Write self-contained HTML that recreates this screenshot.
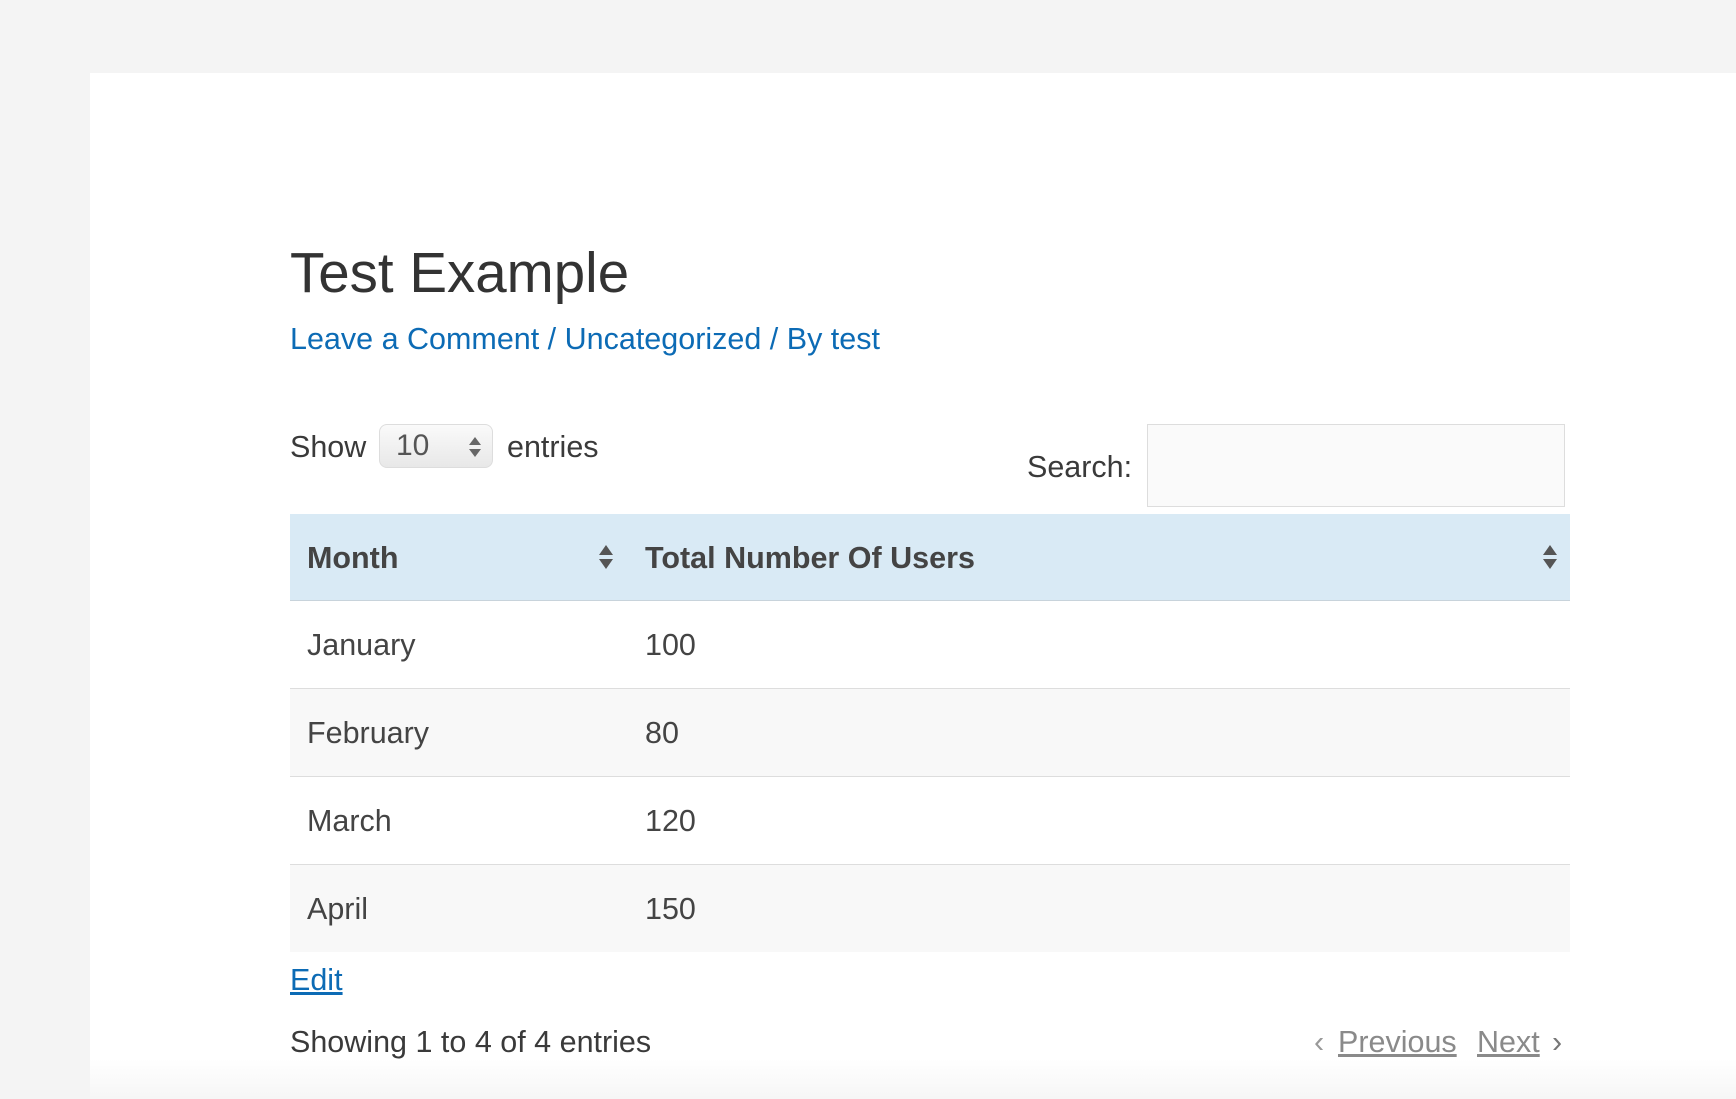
<!DOCTYPE html>
<html><head><meta charset="utf-8"><style>
*{box-sizing:border-box;margin:0;padding:0}
body{width:1736px;height:1099px;background:#f4f4f4;font-family:"Liberation Sans",sans-serif;color:#3a3a3a;position:relative;overflow:hidden}
.card{position:absolute;left:90px;top:73px;right:0;bottom:0;background:#fff}
.fade{position:absolute;left:90px;right:0;bottom:0;height:40px;background:linear-gradient(#fff,#f6f6f6)}
.a{position:absolute;white-space:nowrap}
h1{position:absolute;left:290px;top:233px;font-size:56.5px;font-weight:400;color:#333;line-height:80px}
.meta{left:290px;top:320px;font-size:30.5px;color:#0c6bb5;line-height:38px}
.t{font-size:30.5px;line-height:36px}
.sel{position:absolute;left:379px;top:424px;width:114px;height:44px;border:1px solid #ddd;border-radius:8px;background:linear-gradient(#fafafa,#e8e8e8);font-size:30px;color:#555;padding-left:16px;line-height:42px}
.inp{position:absolute;left:1147px;top:424px;width:418px;height:83px;border:1px solid #ddd;background:#fafafa}
table{position:absolute;left:290px;top:514px;width:1280px;border-collapse:collapse;font-size:30.5px}
th{background:#d9eaf5;height:86px;text-align:left;padding-left:17px;padding-top:3px;font-weight:700;color:#444;border-bottom:1px solid #c8d3db;position:relative}
td{height:88px;padding-left:17px;padding-top:3px;color:#444;border-top:1px solid #ddd}
tr.g td{background:#f8f8f8}
tr:first-child td{border-top:none}
.so{position:absolute;top:30px;width:16px;height:26px}
</style></head><body>
<div class="card"></div><div class="fade"></div>
<h1>Test Example</h1>
<div class="a meta">Leave a Comment / Uncategorized / By test</div>
<div class="a t" style="left:290px;top:429px">Show</div>
<div class="sel">10<svg style="position:absolute;right:10px;top:10px" width="14" height="24" viewBox="0 0 14 24"><path d="M7 2L13 10H1Z M7 22L13 14H1Z" fill="#666"/></svg></div>
<div class="a t" style="left:507px;top:429px">entries</div>
<div class="a t" style="left:1027px;top:449px">Search:</div>
<div class="inp"></div>
<table>
<tr><th style="width:338px">Month<svg class="so" style="left:308px" viewBox="0 0 16 26"><path d="M8 1L15 11H1Z M8 25L15 15H1Z" fill="#555"/></svg></th><th>Total Number Of Users<svg class="so" style="right:12px" viewBox="0 0 16 26"><path d="M8 1L15 11H1Z M8 25L15 15H1Z" fill="#555"/></svg></th></tr>
<tr><td>January</td><td>100</td></tr>
<tr class="g"><td>February</td><td>80</td></tr>
<tr><td>March</td><td>120</td></tr>
<tr class="g"><td>April</td><td>150</td></tr>
</table>
<div class="a t" style="left:290px;top:962px;color:#0c6bb5;text-decoration:underline">Edit</div>
<div class="a t" style="left:290px;top:1024px">Showing 1 to 4 of 4 entries</div>
<div class="a t" style="left:1314px;top:1024px;color:#999">‹</div>
<div class="a t" style="left:1338px;top:1024px;color:#8a8a8a;text-decoration:underline">Previous</div>
<div class="a t" style="left:1477px;top:1024px;color:#8a8a8a;text-decoration:underline">Next</div>
<div class="a t" style="left:1552px;top:1024px;color:#777">›</div>
</body></html>
